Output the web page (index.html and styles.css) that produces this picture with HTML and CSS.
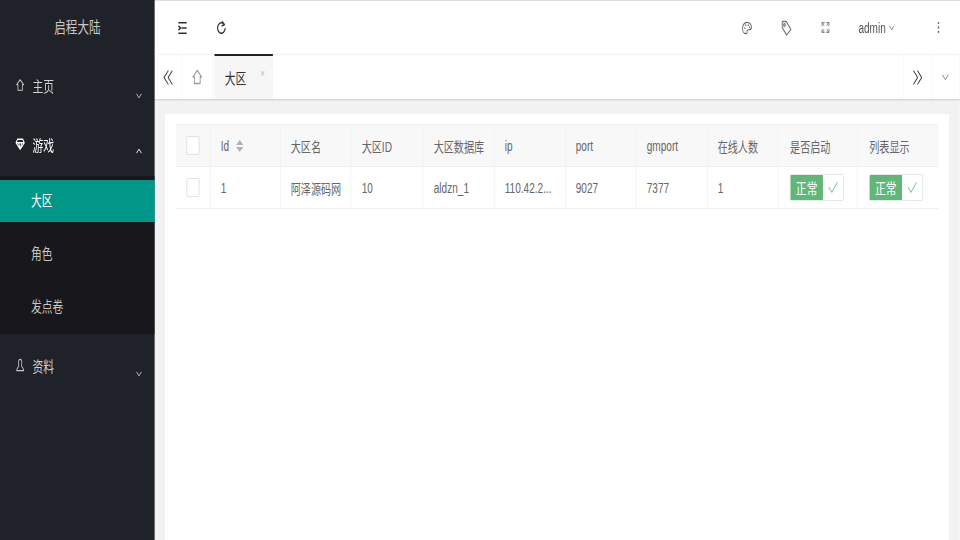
FILE: index.html
```html
<!DOCTYPE html>
<html lang="zh-CN">
<head>
<meta charset="utf-8">
<title>启程大陆</title>
<link rel="stylesheet" href="styles.css">
</head>
<body>
<div class="stage">
  <aside class="side">
    <div class="logo">启程大陆</div>
    <nav class="menu">
      <div class="item item-home">
        <svg class="ic" viewBox="0 0 16 16"><path d="M8 2 L2.5 7.5 H4.5 V14 H11.5 V7.5 H13.5 Z"/></svg>
        <span class="label">主页</span>
        <svg class="arrow" viewBox="0 0 16 16"><path d="M3 5 L8 11 L13 5"/></svg>
      </div>
      <div class="item item-game active">
        <svg class="ic" viewBox="0 0 16 16"><path d="M4 2.5 H12 L14.5 6.5 L8 14 L1.5 6.5 Z M1.5 6.5 H14.5 M5.5 6.5 L8 14 L10.5 6.5"/></svg>
        <span class="label">游戏</span>
        <svg class="arrow" viewBox="0 0 16 16"><path d="M3 11 L8 5 L13 11"/></svg>
      </div>
      <div class="sub">
        <div class="sub-item on">大区</div>
        <div class="sub-item">角色</div>
        <div class="sub-item">发点卷</div>
      </div>
      <div class="item item-data">
        <svg class="ic" viewBox="0 0 16 16"><path d="M8 1.5 C5.5 1.5 5 4 5.5 6.5 C5.8 8 6 8.5 5.5 9.5 C4.5 11 2.5 11.5 2.5 14.5 H13.5 C13.5 11.5 11.5 11 10.5 9.5 C10 8.5 10.2 8 10.5 6.5 C11 4 10.5 1.5 8 1.5 Z"/></svg>
        <span class="label">资料</span>
        <svg class="arrow" viewBox="0 0 16 16"><path d="M3 5 L8 11 L13 5"/></svg>
      </div>
    </nav>
  </aside>
  <main class="main">
    <header class="top">
      <svg class="tool tool-fold" viewBox="0 0 16 16"><path d="M2 2 H14 M7 8 H14 M2 14 H14 M2 6 L5 8 L2 10"/></svg>
      <svg class="tool tool-refresh" viewBox="0 0 16 16"><path d="M12.5 4 A6 6 0 1 0 14 8.5 M9.5 1 L12.8 4.2 L9 5.5"/></svg>
      <div class="spacer"></div>
      <svg class="tool tool-palette" viewBox="0 0 16 16"><path d="M8 1.5 C3.5 1.5 1 5 1 8.5 C1 12 3.5 14.5 6.5 14.5 C8.5 14.5 8 12.5 8 11.5 C8 10 9.5 10 11 10 C13.5 10 15 9 15 7 C15 4 12 1.5 8 1.5 Z"/><circle class="dot" cx="4.5" cy="8" r="1"/><circle class="dot" cx="6" cy="4.8" r="1"/><circle class="dot" cx="10" cy="4.8" r="1"/><circle class="dot" cx="12.3" cy="7.3" r="1"/></svg>
      <svg class="tool tool-tag" viewBox="0 0 16 16"><path d="M2.5 1.5 H8 L14.5 9.5 L8.5 15 L2.5 7.5 Z"/><circle cx="5.5" cy="5" r="1.2"/></svg>
      <svg class="tool tool-full" viewBox="0 0 16 16"><path d="M2 6 V2 H6 M10 2 H14 V6 M14 10 V14 H10 M6 14 H2 V10 M2 2 L5.5 5.5 M14 2 L10.5 5.5 M14 14 L10.5 10.5 M2 14 L5.5 10.5"/></svg>
      <div class="admin">admin<svg class="admin-arrow" viewBox="0 0 16 16"><path d="M2 4 L8 12 L14 4"/></svg></div>
      <svg class="tool tool-more" viewBox="0 0 16 16"><circle class="dot" cx="8" cy="2.5" r="1.4"/><circle class="dot" cx="8" cy="8" r="1.4"/><circle class="dot" cx="8" cy="13.5" r="1.4"/></svg>
    </header>
    <div class="tabs">
      <div class="tab-btn tab-prev"><svg class="tab-ic" viewBox="0 0 16 16"><path d="M8 1 L2 8 L8 15 M14 1 L8 8 L14 15"/></svg></div>
      <div class="tab-btn tab-home"><svg class="tab-ic home" viewBox="0 0 16 16"><path d="M8 1.5 L2 8 H4 V14.5 H12 V8 H14 Z"/></svg></div>
      <div class="tab"><span>大区</span><span class="close">×</span></div>
      <div class="spacer"></div>
      <div class="tab-btn tab-next"><svg class="tab-ic" viewBox="0 0 16 16"><path d="M2 1 L8 8 L2 15 M8 1 L14 8 L8 15"/></svg></div>
      <div class="tab-btn tab-down"><svg class="tab-ic small" viewBox="0 0 16 16"><path d="M2 5 L8 12 L14 5"/></svg></div>
    </div>
    <section class="content">
      <div class="card">
        <div class="table">
          <div class="row head">
            <div class="cell c-check"><span class="check"></span></div>
            <div class="cell">Id<span class="sort"><i class="up"></i><i class="down"></i></span></div>
            <div class="cell">大区名</div>
            <div class="cell">大区ID</div>
            <div class="cell">大区数据库</div>
            <div class="cell">ip</div>
            <div class="cell">port</div>
            <div class="cell">gmport</div>
            <div class="cell">在线人数</div>
            <div class="cell">是否启动</div>
            <div class="cell">列表显示</div>
          </div>
          <div class="row">
            <div class="cell c-check"><span class="check"></span></div>
            <div class="cell">1</div>
            <div class="cell">阿泽源码网</div>
            <div class="cell">10</div>
            <div class="cell">aldzn_1</div>
            <div class="cell">110.42.2...</div>
            <div class="cell">9027</div>
            <div class="cell">7377</div>
            <div class="cell">1</div>
            <div class="cell"><div class="switch"><span class="sw-on">正常</span><span class="sw-off"><svg class="sw-ic" viewBox="0 0 16 16"><path d="M1 8 L6 14 L15 2"/></svg></span></div></div>
            <div class="cell"><div class="switch"><span class="sw-on">正常</span><span class="sw-off"><svg class="sw-ic" viewBox="0 0 16 16"><path d="M1 8 L6 14 L15 2"/></svg></span></div></div>
          </div>
        </div>
      </div>
    </section>
  </main>
</div>
</body>
</html>
```
FILE: styles.css
```css
* { box-sizing: border-box; }
html, body { margin: 0; padding: 0; height: 100%; overflow: hidden; background: #fff; }
body { font-family: "Liberation Sans", "Noto Sans CJK SC", sans-serif; color: #666; }

/* The reference is horizontally squeezed: everything is laid out wider and scaled. */
.stage {
  width: 1333.33px;
  height: 540px;
  display: flex;
  transform: scaleX(0.72);
  transform-origin: 0 0;
}
svg { display: block; fill: none; stroke-linecap: round; stroke-linejoin: round; }

/* sidebar */
.side { width: 215px; flex: none; background: #20222a; color: #d2d2d2; }
.logo { height: 56px; line-height: 56px; text-align: center; font-size: 16px; color: #c8c8c8; }
.menu { display: flex; flex-direction: column; }
.item { display: flex; align-items: center; padding-left: 19px; font-size: 15px; position: relative; }
.item-home { height: 58px; }
.item-game { height: 62px; color: #fff; padding-bottom: 2px; }
.item-data { height: 62px; }
.ic { width: 18px; height: 14px; stroke: #c8c8c8; stroke-width: 1.3; margin-right: 8px; }
.item-game .ic { stroke: #fff; stroke-width: 1.6; }
.arrow { position: absolute; left: 186px; top: 35px; width: 14px; height: 10px; stroke: #c8c8c8; stroke-width: 1.6; }
.item-game .arrow { stroke: #fff; top: 32px; }
.sub { background: #18181c; padding-top: 4px; height: 158px; display: flex; flex-direction: column; }
.sub-item { height: 53px; line-height: 53px; padding-left: 43px; font-size: 15px; color: #c4c4c4; }
.sub-item.on { height: 42px; line-height: 42px; background: #009688; color: #fff; margin-bottom: 5px; }

/* main */
.main { flex: 1; min-width: 0; display: flex; flex-direction: column; height: 540px; border-top: 1px solid #ddd; }
.top { height: 53px; flex: none; display: flex; align-items: center; background: #fff; padding-left: 29px; padding-right: 20px; }
.spacer { flex: 1; }
.tool { height: 14px; width: 19px; stroke: #555; stroke-width: 1.4; }
.dot { fill: #666; stroke: none; }
.tool-fold { margin-right: 35px; stroke: #333; stroke-width: 1.8; }
.tool-refresh { stroke: #333; stroke-width: 1.8; }
.tool-palette { width: 19px; margin-right: 36px; stroke: #666; }
.tool-tag { height: 16px; width: 18px; margin-right: 37px; stroke: #777; }
.tool-full { height: 13px; width: 17px; margin-right: 37px; stroke: #888; }
.tool-more { height: 13px; width: 19px; margin-left: 48px; }
.admin { display: flex; align-items: center; font-size: 14px; color: #555; }
.admin-arrow { width: 15px; height: 8px; stroke: #444; stroke-width: 1.3; margin-left: 1px; }

.tabs { height: 45px; flex: none; display: flex; align-items: stretch; background: #fff; box-shadow: 0 1px 2px rgba(0,0,0,.16); border-top: 1px solid #f2f2f2; position: relative; }
.tab-btn { display: flex; align-items: center; justify-content: center; border-right: 1px solid #f6f6f6; }
.tab-prev { width: 38px; }
.tab-home { width: 43px; }
.tab-next { width: 40px; margin-right: 0; border-left: 1px solid #f6f6f6; border-right: 0; }
.tab-down { width: 36px; border-left: 1px solid #f6f6f6; border-right: 0; margin-right: 3px; }
.tab-ic { width: 17px; height: 15px; stroke: #444; stroke-width: 1.3; }
.tab-ic.home { stroke: #999; width: 18px; height: 16px; }
.tab-ic.small { width: 14px; height: 10px; stroke: #555; }
.tab { width: 81px; margin-left: 2px; margin-top: -1px; background: #f6f6f6; border-top: 2px solid #222; display: flex; align-items: center; padding-left: 14px; font-size: 15px; color: #333; position: relative; }
.close { position: absolute; right: 11px; top: 11px; font-size: 11px; color: #bbb; }

.content { flex: 1; min-height: 0; background: #f2f2f2; padding: 15px 14px 0 14px; }
.card { height: 100%; background: #fff; padding: 10px 15px; margin-right: 1px; }
.table { border-top: 1px solid #eee; }
.row {
  display: grid;
  grid-template-columns: 48.6px 97.2px 98.6px 100px 98.6px 98.6px 98.6px 98.6px 98.6px 110px 111px;
  height: 42px;
  border-bottom: 1px solid #eee;
  font-size: 14px;
  color: #666;
}
.head { background: #f8f8f8; color: #666; }
.cell { display: flex; align-items: center; padding-left: 14px; border-right: 1px solid #f2f2f2; white-space: nowrap; overflow: hidden; }
.cell:last-child { border-right: 0; }
.c-check { justify-content: flex-start; padding-left: 15px; }
.check { width: 18px; height: 19px; background: #fff; border: 1px solid #ddd; border-radius: 2px; }
.sort { display: inline-flex; flex-direction: column; gap: 2px; margin-left: 10px; }
.up { width: 0; height: 0; border-left: 5px solid transparent; border-right: 5px solid transparent; border-bottom: 5px solid #b2b2b2; }
.down { width: 0; height: 0; border-left: 5px solid transparent; border-right: 5px solid transparent; border-top: 5px solid #b2b2b2; }
.switch { display: flex; height: 27px; width: 75px; border-radius: 2px; overflow: hidden; border: 1px solid #e2e2e2; }
.sw-on { width: 46px; margin: -1px 0 -1px -1px; background: #5fb878; color: #fff; font-size: 15px; display: flex; align-items: center; justify-content: center; }
.sw-off { flex: 1; background: #fff; display: flex; align-items: center; justify-content: center; }
.sw-ic { width: 20px; height: 13px; stroke: #5fb878; stroke-width: 1.2; }
.cell:nth-child(n+10) { padding-left: 16px; }
```
